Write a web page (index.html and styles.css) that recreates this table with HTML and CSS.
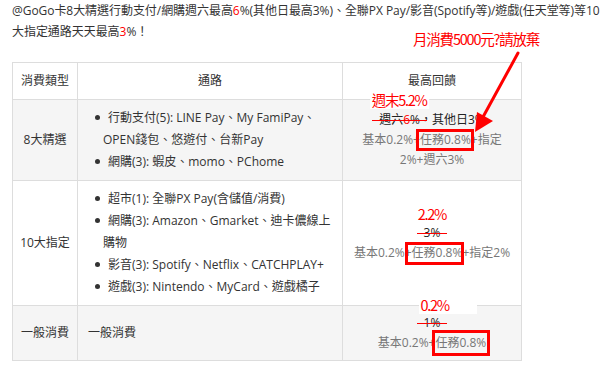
FILE: index.html
```html
<!DOCTYPE html>
<html lang="zh-Hant">
<head>
<meta charset="utf-8">
<link rel="stylesheet" href="styles.css">
</head>
<body>
<div class="page">
  <p class="intro">@GoGo卡8大精選行動支付/網購週六最高<span class="hot">6</span>%(其他日最高3%)、全聯PX Pay/影音(Spotify等)/遊戲(任天堂等)等10<br>大指定通路天天最高<span class="hot">3</span>%！</p>

  <table class="rewards">
    <colgroup>
      <col class="col-type">
      <col class="col-channel">
      <col class="col-reward">
    </colgroup>
    <thead>
      <tr>
        <th>消費類型</th>
        <th>通路</th>
        <th>最高回饋</th>
      </tr>
    </thead>
    <tbody>
      <tr class="shade">
        <td class="type">8大精選</td>
        <td class="channel">
          <ul class="list">
            <li>行動支付(5): LINE Pay、My FamiPay、OPEN錢包、悠遊付、台新Pay</li>
            <li>網購(3): 蝦皮、momo、PChome</li>
          </ul>
        </td>
        <td class="reward">
          <div class="main"><span class="struck"><span class="note note-boxed">週末5.2%</span>週六<span class="hot">6</span>%</span>，其他日3%</div>
          <div class="sub">基本0.2%+<span class="mark mark-1">任務0.8%</span>+指定<br>2%+週六3%</div>
        </td>
      </tr>
      <tr>
        <td class="type">10大指定</td>
        <td class="channel">
          <ul class="list">
            <li>超市(1): 全聯PX Pay(含儲值/消費)</li>
            <li>網購(3): Amazon、Gmarket、迪卡儂線上購物</li>
            <li>影音(3): Spotify、Netflix、CATCHPLAY+</li>
            <li>遊戲(3): Nintendo、MyCard、遊戲橘子</li>
          </ul>
        </td>
        <td class="reward">
          <div class="main"><span class="struck"><span class="note">2.2%</span>3%</span></div>
          <div class="sub">基本0.2%+<span class="mark mark-2">任務0.8%</span>+指定2%</div>
        </td>
      </tr>
      <tr class="shade">
        <td class="type">一般消費</td>
        <td class="channel plain">一般消費</td>
        <td class="reward">
          <div class="main"><span class="struck"><span class="note note-boxed note-wide">0.2%</span>1%</span></div>
          <div class="sub">基本0.2%+<span class="mark mark-3">任務0.8%</span></div>
        </td>
      </tr>
    </tbody>
  </table>

  <div class="callout">月消費5000元?請放棄</div>
  <svg class="arrow" width="600" height="368" viewBox="0 0 600 368" aria-hidden="true">
    <line x1="518" y1="53" x2="483" y2="117" stroke="#ff0000" stroke-width="3" stroke-linecap="round"/>
    <polygon points="475,132 477,112 493,121" fill="#ff0000"/>
  </svg>
</div>
</body>
</html>
```

FILE: styles.css
```css
html, body {
  margin: 0;
  padding: 0;
  background: #ffffff;
}

body {
  width: 600px;
  height: 368px;
  overflow: hidden;
  font-family: "Open Sans", "Noto Sans CJK TC", sans-serif;
  color: #333333;
}

.page {
  position: relative;
  padding: 0 0 0 12px;
}

.intro {
  margin: 0;
  font-size: 12px;
  line-height: 21px;
  letter-spacing: -0.05px;
  white-space: nowrap;
  color: #333333;
}

.hot {
  color: #ff0000;
}

.rewards {
  margin-top: 20px;
  border-collapse: collapse;
  table-layout: fixed;
  width: 509px;
  font-size: 12px;
  line-height: 22px;
  color: #333333;
}

.col-type { width: 65px; }
.col-channel { width: 265px; }
.col-reward { width: 179px; }

.rewards th,
.rewards td {
  border: 1px solid #dddddd;
  padding: 7px 8px;
  vertical-align: middle;
  font-weight: normal;
}

.rewards th {
  text-align: center;
  background: #ffffff;
}

.rewards th:first-child,
.rewards td.type {
  padding-left: 2px;
  padding-right: 2px;
  white-space: nowrap;
}

.shade td {
  background: #f5f5f5;
}

.type {
  text-align: center;
}

.channel {
  text-align: left;
}

.channel.plain {
  padding-left: 10px;
}

.list {
  margin: 0;
  padding: 0 0 0 17px;
  list-style: none;
}

.list li::before {
  content: "";
  display: inline-block;
  width: 5px;
  height: 5px;
  margin: 0 8px 2px -8px;
  border-radius: 50%;
  background: #333333;
  vertical-align: middle;
}

.reward {
  text-align: center;
  line-height: 20px;
}

.main {
  color: #222222;
}

.sub {
  color: #777777;
}

.struck {
  position: relative;
}

.struck::after {
  content: "";
  position: absolute;
  left: -7px;
  right: -7px;
  top: 50%;
  height: 1.5px;
  background: #ff0000;
}

.note {
  position: absolute;
  left: 50%;
  bottom: 100%;
  margin-bottom: 2px;
  transform: translateX(-50%);
  font-size: 14.5px;
  line-height: 16px;
  color: #ff0000;
  white-space: nowrap;
  letter-spacing: -1.3px;
  font-family: "Noto Sans CJK TC", sans-serif;
}

.note-boxed {
  background: #ffffff;
  padding: 0 3px 1px 2px;
}

.note-wide {
  padding-right: 28px;
  left: -5px;
  margin-bottom: 0;
  transform: none;
}

.mark {
  position: relative;
}

.mark::after {
  content: "";
  position: absolute;
  border: 3px solid #ff0000;
  pointer-events: none;
}

.mark-1::after { left: -4px; right: -3px; top: -2px; bottom: -3px; }
.mark-2::after { left: -7px; right: -2px; top: -2px; bottom: -4px; }
.mark-3::after { left: -3px; right: -4px; top: -4px; bottom: -5px; }

.callout {
  position: absolute;
  left: 413px;
  top: 30px;
  font-family: "Noto Sans CJK TC", sans-serif;
  font-size: 14.5px;
  line-height: 18px;
  letter-spacing: -1.2px;
  color: #ff0000;
  white-space: nowrap;
}

.arrow {
  position: absolute;
  left: 0;
  top: 0;
  pointer-events: none;
}
```
